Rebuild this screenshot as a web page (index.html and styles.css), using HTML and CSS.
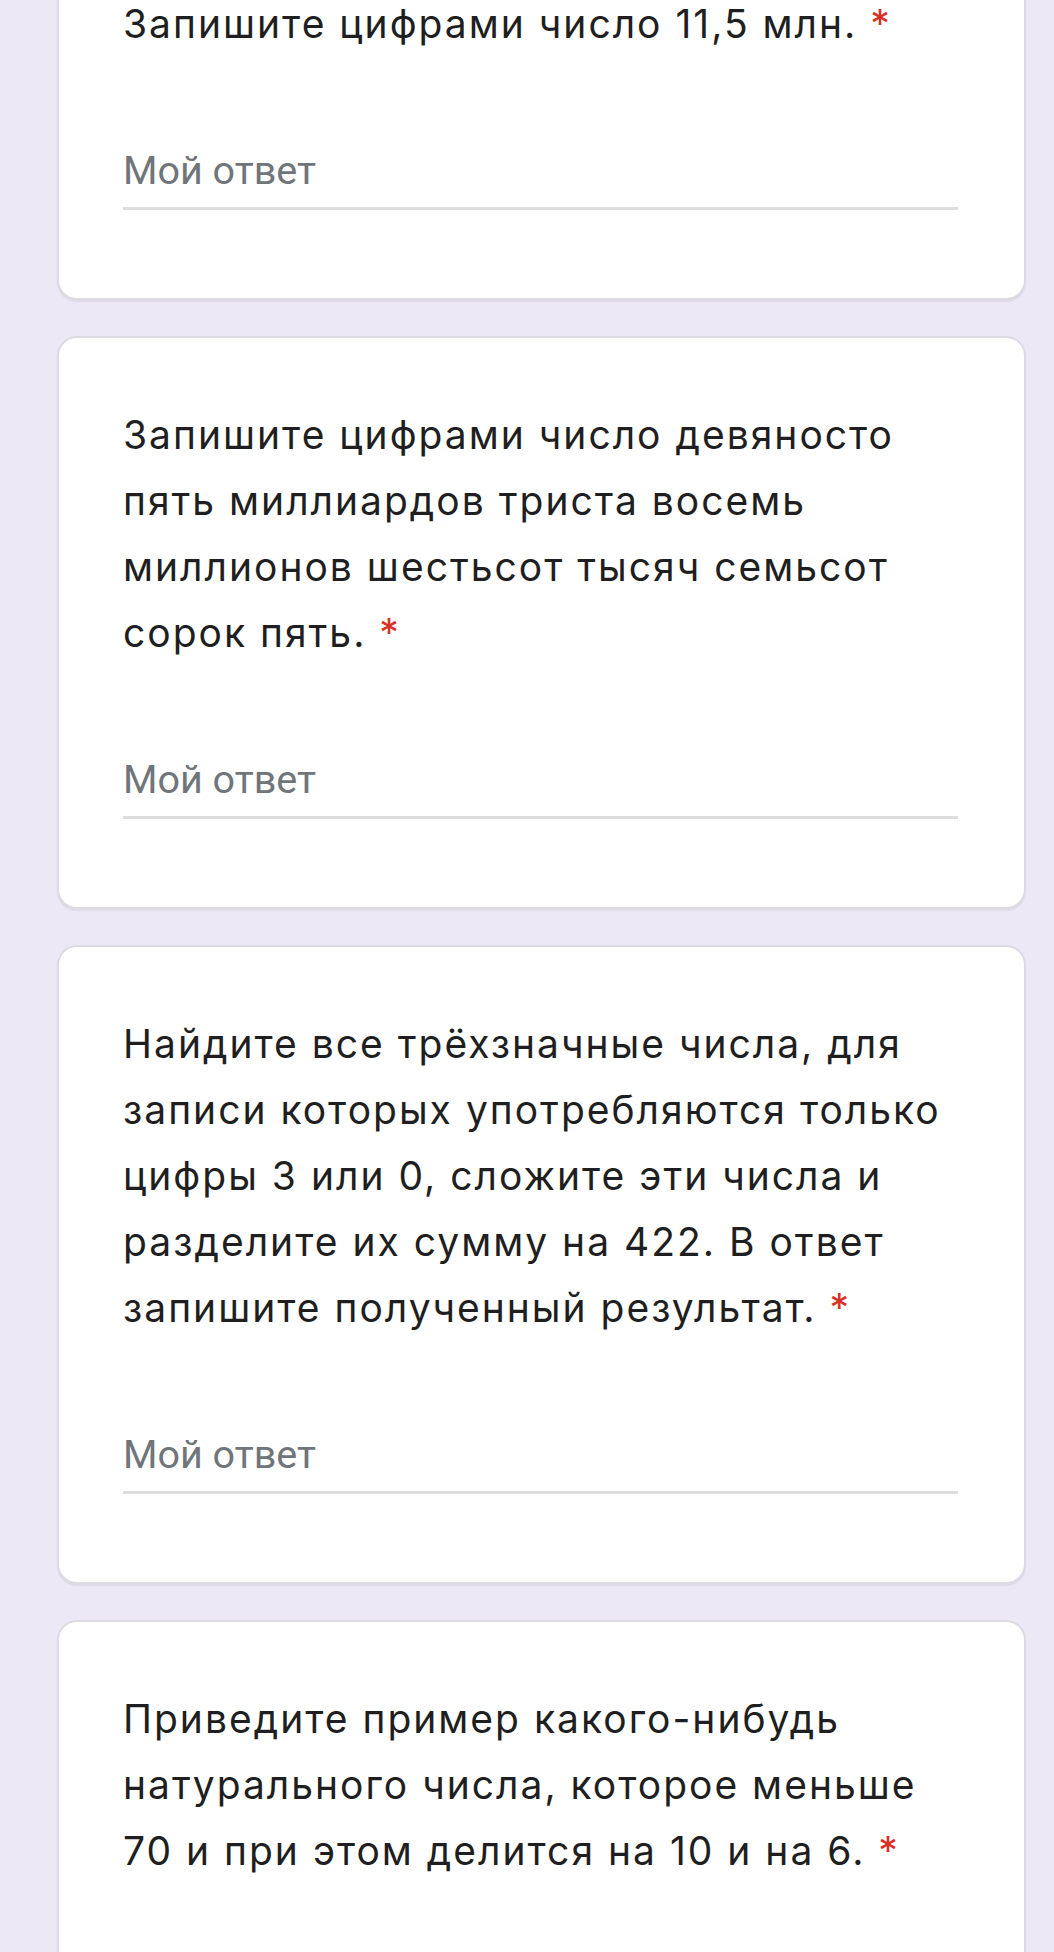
FILE: index.html
```html
<!DOCTYPE html>
<html lang="ru">
<head>
<meta charset="utf-8">
<title>Форма</title>
<link rel="stylesheet" href="styles.css">
</head>
<body>
<main class="form">
  <section class="card">
    <div class="question">Запишите цифрами число 11,5 млн. <span class="req">*</span></div>
    <div class="answer"><span class="placeholder">Мой ответ</span></div>
  </section>
  <section class="card">
    <div class="question">Запишите цифрами число девяносто пять миллиардов триста восемь миллионов шестьсот тысяч семьсот сорок пять. <span class="req">*</span></div>
    <div class="answer"><span class="placeholder">Мой ответ</span></div>
  </section>
  <section class="card">
    <div class="question">Найдите все трёхзначные числа, для записи которых употребляются только цифры 3 или 0, сложите эти числа и разделите их сумму на 422. В ответ запишите полученный результат. <span class="req">*</span></div>
    <div class="answer"><span class="placeholder">Мой ответ</span></div>
  </section>
  <section class="card">
    <div class="question">Приведите пример какого-нибудь натурального числа, которое меньше 70 и при этом делится на 10 и на 6. <span class="req">*</span></div>
    <div class="answer"><span class="placeholder">Мой ответ</span></div>
  </section>
</main>
</body>
</html>
```
FILE: styles.css
```css
html, body {
  margin: 0;
  padding: 0;
  background: #ece8f6;
  overflow: hidden;
}
.form {
  display: flex;
  flex-direction: column;
  gap: 36px;
  margin-top: -75px;
  padding: 0 28px 0 57px;
}
.card {
  background: #ffffff;
  border: 2px solid #dcdbe2;
  border-radius: 20px;
  box-shadow: 0 2px 1px rgba(60, 64, 67, 0.08);
  padding: 64px 66px 88px 64px;
}
.question {
  font-family: "Inter", "Noto Sans", sans-serif;
  font-size: 39px;
  letter-spacing: 2px;
  line-height: 66px;
  color: #1f1f22;
}
.req {
  color: #d93025;
}
.answer {
  margin-top: 91px;
  padding-bottom: 13px;
  border-bottom: 3px solid #dddde0;
}
.placeholder {
  display: block;
  font-family: "Roboto", "Liberation Sans", sans-serif;
  font-size: 39.5px;
  line-height: 46px;
  color: #70757a;
}
```
